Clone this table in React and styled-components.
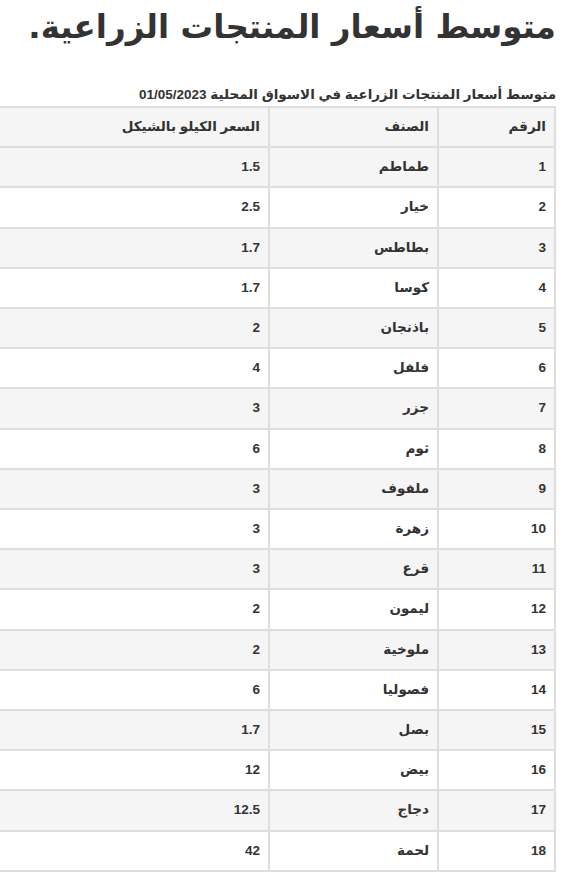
import React from "react";
import styled, { createGlobalStyle } from "styled-components";

const rows = [
  ["1", "طماطم", "1.5"],
  ["2", "خيار", "2.5"],
  ["3", "بطاطس", "1.7"],
  ["4", "كوسا", "1.7"],
  ["5", "باذنجان", "2"],
  ["6", "فلفل", "4"],
  ["7", "جزر", "3"],
  ["8", "ثوم", "6"],
  ["9", "ملفوف", "3"],
  ["10", "زهرة", "3"],
  ["11", "قرع", "3"],
  ["12", "ليمون", "2"],
  ["13", "ملوخية", "2"],
  ["14", "فصوليا", "6"],
  ["15", "بصل", "1.7"],
  ["16", "بيض", "12"],
  ["17", "دجاج", "12.5"],
  ["18", "لحمة", "42"],
];

const GlobalStyle = createGlobalStyle`
  html, body {
    margin: 0;
    padding: 0;
    background: #fff;
    overflow: hidden;
  }
  body {
    direction: rtl;
    font-family: "Liberation Sans", "DejaVu Sans", sans-serif;
    color: #333;
  }
`;

const Page = styled.div`
  padding: 0 27px 0 0;
`;

const Title = styled.h1`
  margin: 0;
  padding-top: 4px;
  font-family: "DejaVu Sans", sans-serif;
  font-size: 32.5px;
  line-height: 46px;
  font-weight: bold;
  color: #333;
  white-space: nowrap;
`;

const Caption = styled.div`
  margin-top: 37px;
  font-size: 13.5px;
  line-height: 16px;
  font-weight: bold;
  color: #333;
  white-space: nowrap;
`;

const Table = styled.table`
  margin-top: 3px;
  width: 640px;
  border-collapse: collapse;
  table-layout: fixed;
  border: 2px solid #dedede;
`;

const Row = styled.tr`
  background: ${(p) => (p.$striped ? "#f5f5f5" : "#fff")};
`;

const Cell = styled.td`
  width: ${(p) => p.$w || "auto"};
  border: 2px solid #dedede;
  padding: 9px 8px;
  line-height: 20.2px;
  font-size: 13.5px;
  font-weight: bold;
  text-align: right;
  color: #333;
  white-space: nowrap;
`;

export default function App() {
  return (
    <>
      <GlobalStyle />
      <Page>
        <Title>متوسط أسعار المنتجات الزراعية.</Title>
        <Caption>متوسط أسعار المنتجات الزراعية في الاسواق المحلية 01/05/2023</Caption>
        <Table>
          <thead>
            <Row $striped>
              <Cell as="th" $w="99px">الرقم</Cell>
              <Cell as="th" $w="151px">الصنف</Cell>
              <Cell as="th">السعر الكيلو بالشيكل</Cell>
            </Row>
          </thead>
          <tbody>
            {rows.map((r, i) => (
              <Row key={r[0]} $striped={i % 2 === 0}>
                <Cell>{r[0]}</Cell>
                <Cell>{r[1]}</Cell>
                <Cell>{r[2]}</Cell>
              </Row>
            ))}
          </tbody>
        </Table>
      </Page>
    </>
  );
}
